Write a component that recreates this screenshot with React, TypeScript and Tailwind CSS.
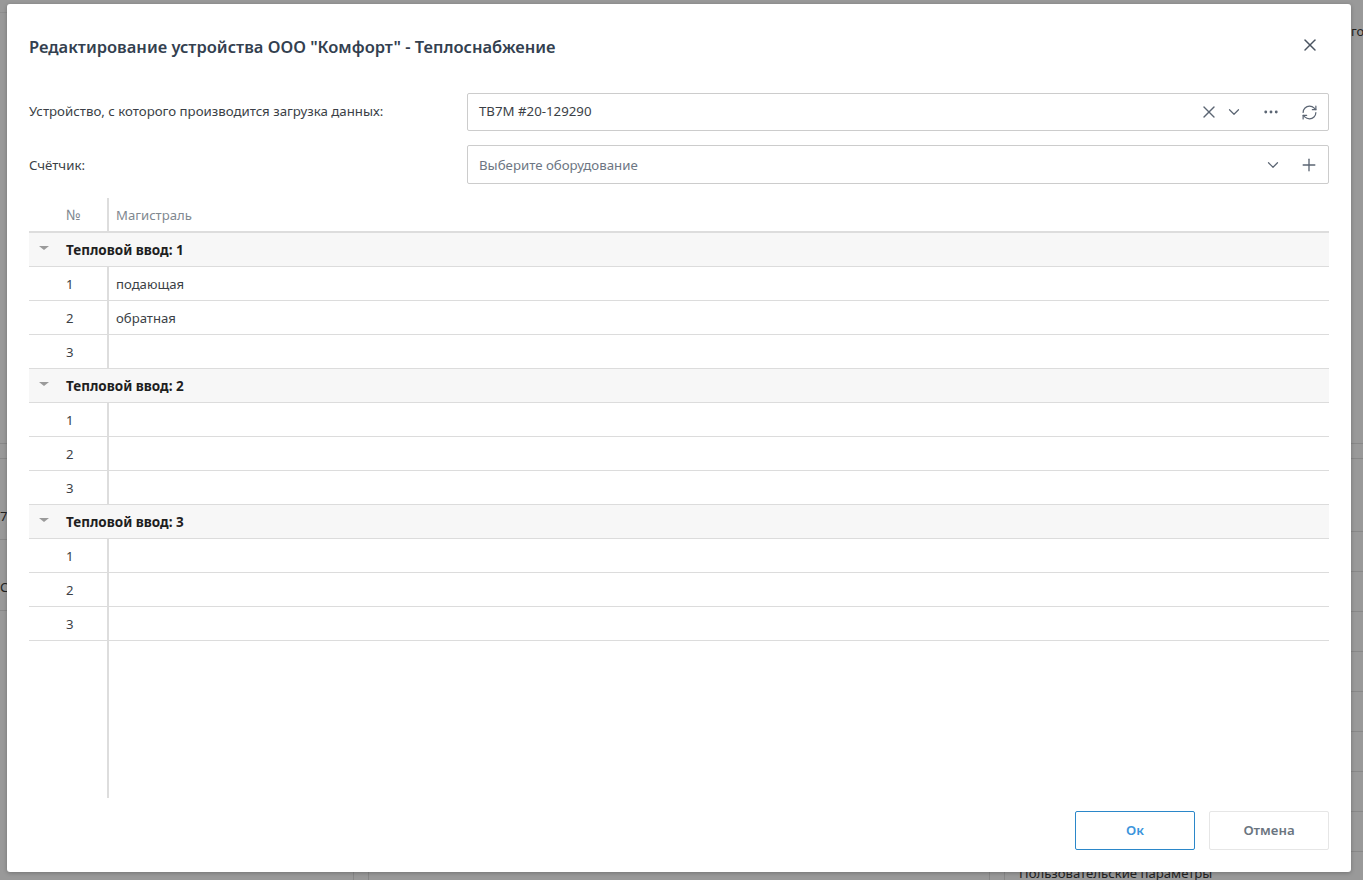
import { X, ChevronDown, MoreHorizontal, RefreshCw, Plus } from "lucide-react";

const groups = [
  { title: "Тепловой ввод: 1", rows: ["подающая", "обратная", ""] },
  { title: "Тепловой ввод: 2", rows: ["", "", ""] },
  { title: "Тепловой ввод: 3", rows: ["", "", ""] },
];

function Row({ num, name }: { num: number; name: string }) {
  return (
    <div className="flex h-[34px] border-b border-[#dcdcdc] text-[13.15px] text-[#3b3f46]">
      <div className="w-[78px] pl-[37px] leading-[35px]">{num}</div>
      <div className="w-[2px] bg-[#dddddd]" />
      <div className="pl-[7px] leading-[35px]">{name}</div>
    </div>
  );
}

export default function App() {
  return (
    <div className="relative h-[880px] w-[1363px] overflow-hidden bg-[#999999] pl-[7px] pt-[4px] font-['Noto_Sans','Open_Sans',sans-serif]">
      {/* затемнённая страница за окном */}
      <div className="absolute left-0 top-[12px] h-px w-[7px] bg-[#8e8e8e]" />
      <div className="absolute left-0 top-[443px] h-px w-[7px] bg-[#888888]" />
      <div className="absolute left-0 top-[458px] h-px w-[7px] bg-[#888888]" />
      <div className="absolute left-0 top-[539px] h-px w-[7px] bg-[#888888]" />
      <div className="absolute left-0 top-[610px] h-px w-[7px] bg-[#888888]" />
      <div className="absolute left-0 top-[507px] text-[13px] leading-[18px] text-[#222222]">7</div>
      <div className="absolute left-0 top-[578px] text-[13px] leading-[18px] text-[#222222]">C</div>
      <div className="absolute left-[1351px] top-[22px] text-[13px] leading-[18px] text-[#222222]">го</div>
      {[443, 458, 531, 571, 611, 651, 691, 731, 771, 811, 851].map((y) => (
        <div key={y} className="absolute left-[1351px] h-px w-[12px] bg-[#888888]" style={{ top: y }} />
      ))}
      <div className="absolute left-[353px] top-[872px] h-[8px] w-px bg-[#888888]" />
      <div className="absolute left-[368px] top-[872px] h-[8px] w-px bg-[#888888]" />
      <div className="absolute left-[989px] top-[872px] h-[8px] w-px bg-[#888888]" />
      <div className="absolute left-[1004px] top-[872px] h-[8px] w-px bg-[#888888]" />
      <div className="absolute left-[1019px] top-[864px] text-[13.15px] leading-[18px] text-[#222222]">Пользовательские параметры</div>

      {/* модальное окно */}
      <div className="relative flex h-[868px] w-[1344px] flex-col rounded-[3px] bg-white px-[22px] shadow-[0_1px_4px_rgba(0,0,0,0.25)]">
        <div className="flex h-[86px] items-center justify-between pt-[1px]">
          <h1 className="text-[16.5px] font-semibold text-[#33404f]">
            Редактирование устройства ООО "Комфорт" - Теплоснабжение
          </h1>
          <X className="mr-[9px] mb-[5px] h-[20px] w-[20px] text-[#4a5461]" strokeWidth={1.8} />
        </div>

        <div className="mt-[3px] flex items-center">
          <div className="w-[438px] text-[13.25px] text-[#3b3f46]">Устройство, с которого производится загрузка данных:</div>
          <div className="flex h-[38px] flex-1 items-center rounded-[2px] border border-[#cccccc] pl-[11px] text-[13.25px] text-[#3b3f46]">
            <span className="flex-1">ТВ7М #20-129290</span>
            <X className="h-[20px] w-[20px] text-[#5b6573]" strokeWidth={1.6} />
            <ChevronDown className="ml-[6px] h-[18px] w-[18px] text-[#5b6573]" strokeWidth={1.6} />
            <MoreHorizontal className="ml-[19px] h-[18px] w-[18px] text-[#5b6573]" strokeWidth={1.8} />
            <RefreshCw className="ml-[21px] mr-[10px] h-[17px] w-[17px] text-[#5b6573]" strokeWidth={1.7} />
          </div>
        </div>

        <div className="mt-[14px] flex items-center">
          <div className="w-[438px] pt-[2px] text-[13.25px] text-[#3b3f46]">Счётчик:</div>
          <div className="flex h-[39px] flex-1 items-center rounded-[2px] border border-[#cccccc] pl-[11px] text-[13.25px] text-[#6d7683]">
            <span className="flex-1 pt-[2px]">Выберите оборудование</span>
            <ChevronDown className="h-[18px] w-[18px] text-[#5b6573]" strokeWidth={1.6} />
            <Plus className="ml-[17px] mr-[9px] h-[20px] w-[20px] text-[#5b6573]" strokeWidth={1.6} />
          </div>
        </div>

        {/* таблица */}
        <div className="mt-[14px] flex h-[600px] flex-col">
          <div className="flex h-[35px] border-b-2 border-[#dddddd] text-[13.15px] text-[#808890]">
            <div className="w-[78px] pl-[37px] text-[14.5px] leading-[33px]">№</div>
            <div className="w-[2px] bg-[#dddddd]" />
            <div className="pl-[7px] leading-[35px]">Магистраль</div>
          </div>
          {groups.map((g) => (
            <div key={g.title}>
              <div className="flex h-[34px] items-center border-b border-[#dcdcdc] bg-[#f7f7f7] text-[13.5px] font-bold text-[#1f1f1f]">
                <div className="ml-[10px] mb-[3px] h-0 w-0 border-x-[5px] border-t-[4px] border-x-transparent border-t-[#9a9a9a]" />
                <span className="ml-[17px] pt-[1px]">{g.title}</span>
              </div>
              {g.rows.map((name, i) => (
                <Row key={i} num={i + 1} name={name} />
              ))}
            </div>
          ))}
          <div className="ml-[78px] w-[2px] flex-1 bg-[#dddddd]" />
        </div>

        <div className="mt-[13px] flex justify-end gap-[14px] text-[13.25px] font-semibold">
          <button className="h-[39px] w-[120px] rounded-[2px] border border-[#2b87c9] pt-[1px] text-[#3b95dc]">Ок</button>
          <button className="h-[39px] w-[120px] rounded-[2px] border border-[#e6e6e6] pt-[1px] text-[#6b7580]">Отмена</button>
        </div>
      </div>
    </div>
  );
}
